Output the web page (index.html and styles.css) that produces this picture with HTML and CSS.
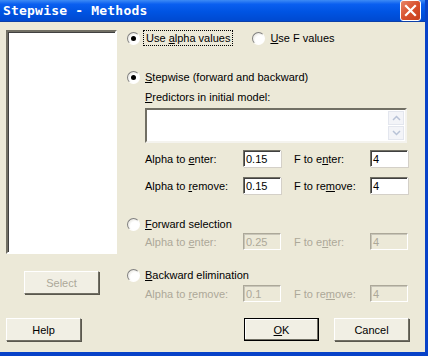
FILE: index.html
```html
<!DOCTYPE html>
<html lang="en">
<head>
  <meta charset="UTF-8">
  <title>Stepwise - Methods</title>
  <link rel="stylesheet" href="styles.css">
</head>
<body>

<div class="window">
  <div class="titlebar">
    <span class="title">Stepwise - Methods</span>
    <div class="close">
      <svg width="19" height="19" viewBox="0 0 19 19">
        <path d="M5 5 L14 14 M14 5 L5 14" stroke="#fff" stroke-width="2.2" stroke-linecap="square"/>
      </svg>
    </div>
  </div>

  <div class="content">
    <div class="main">
      <!-- variable list -->
      <div class="left">
        <div class="listbox"></div>
        <button class="btn select-btn" disabled>Select</button>
      </div>

      <!-- options -->
      <div class="right">
        <div class="row opts">
          <label class="radio-label focus"><span class="radio checked"></span><span class="focus-text">Use <u>a</u>lpha values</span></label>
          <label class="radio-label use-f"><span class="radio"></span><span><u>U</u>se F values</span></label>
        </div>

        <div class="row method stepwise">
          <label class="radio-label"><span class="radio checked"></span><span><u>S</u>tepwise (forward and backward)</span></label>
        </div>
        <div class="row indent predictors"><u>P</u>redictors in initial model:</div>
        <div class="textarea indent">
          <div class="scroll">
            <div class="arrow">
              <svg width="9" height="6" viewBox="0 0 9 6"><path d="M1 5 L4.5 1.5 L8 5" fill="none" stroke="#b8c2d6" stroke-width="1.5"/></svg>
            </div>
            <div class="arrow">
              <svg width="9" height="6" viewBox="0 0 9 6"><path d="M1 1 L4.5 4.5 L8 1" fill="none" stroke="#b8c2d6" stroke-width="1.5"/></svg>
            </div>
          </div>
        </div>
        <div class="params indent first">
          <span class="plabel">Alpha to <u>e</u>nter:</span>
          <span class="field">0.15</span>
          <span class="flabel">F to e<u>n</u>ter:</span>
          <span class="field">4</span>
        </div>
        <div class="params indent second">
          <span class="plabel">Alpha to <u>r</u>emove:</span>
          <span class="field">0.15</span>
          <span class="flabel">F to re<u>m</u>ove:</span>
          <span class="field">4</span>
        </div>

        <div class="row method forward">
          <label class="radio-label"><span class="radio"></span><span><u>F</u>orward selection</span></label>
        </div>
        <div class="params indent disabled">
          <span class="plabel">Alpha to <u>e</u>nter:</span>
          <span class="field">0.25</span>
          <span class="flabel">F to e<u>n</u>ter:</span>
          <span class="field">4</span>
        </div>

        <div class="row method backward">
          <label class="radio-label"><span class="radio"></span><span><u>B</u>ackward elimination</span></label>
        </div>
        <div class="params indent disabled last">
          <span class="plabel">Alpha to <u>r</u>emove:</span>
          <span class="field">0.1</span>
          <span class="flabel">F to re<u>m</u>ove:</span>
          <span class="field">4</span>
        </div>
      </div>
    </div>

    <div class="bottom">
      <button class="btn">Help</button>
      <div class="spacer"></div>
      <button class="btn default"><u>O</u>K</button>
      <button class="btn cancel">Cancel</button>
    </div>
  </div>
</div>

</body>
</html>
```

FILE: styles.css
```css
body {
  margin: 0;
  font-family: "Liberation Sans", Arial, sans-serif;
  font-size: 11px;
  color: #000;
  background: #0a4ed8;
}
.window {
  width: 425px;
  height: 352px;
  background: #ece9d8;
  border-right: 3px solid #0842c8;
  border-bottom: 4px solid #0842c8;
  display: flex;
  flex-direction: column;
}
.titlebar {
  height: 21px;
  background: linear-gradient(#3d8bf5 0%, #0a5ff0 20%, #0054e3 55%, #0049d0 100%);
  border-bottom: 1px solid #0c3fa8;
  display: flex;
  align-items: center;
  padding-left: 3px;
}
.title {
  font-family: "DejaVu Sans Mono", monospace;
  font-weight: bold;
  font-size: 13px;
  color: #fff;
  letter-spacing: 0.2px;
  flex: 1;
}
.close {
  width: 19px;
  height: 19px;
  margin-right: 4px;
  border: 1px solid #fff;
  border-radius: 3px;
  background: linear-gradient(135deg, #e8856a 0%, #d8512e 50%, #c8401e 100%);
  display: flex;
  align-items: center;
  justify-content: center;
}
.content {
  flex: 1;
  display: flex;
  flex-direction: column;
  padding: 8px 0 0 6px;
}
.main {
  display: flex;
}
.left {
  width: 111px;
  display: flex;
  flex-direction: column;
}
.listbox {
  height: 220px;
  background: #fff;
  border: 2px solid;
  border-color: #716f64 #fff #fff #716f64;
  box-shadow: inset 1px 1px 0 #404040;
}
.btn {
  font-family: "Liberation Sans", Arial, sans-serif;
  font-size: 11px;
  width: 75px;
  height: 23px;
  padding: 0;
  background: #f1efe4;
  color: #000;
  border: 1px solid;
  border-color: #fff #716f64 #716f64 #fff;
  box-shadow: 1px 1px 0 #5a584e;
}
.btn:disabled {
  color: #aca899;
}
.select-btn {
  margin: 17px 0 0 18px;
}
.right {
  margin-left: 10px;
  width: 281px;
  display: flex;
  flex-direction: column;
}
.row {
  height: 16px;
  display: flex;
  align-items: center;
}
.indent {
  margin-left: 18px;
}
.radio-label {
  display: flex;
  align-items: center;
}
.radio {
  width: 11px;
  height: 11px;
  border: 1px solid;
  border-color: #808080 #fff #fff #808080;
  border-radius: 50%;
  background: radial-gradient(circle at 65% 65%, #fff 45%, #d8d6cc 100%);
  margin-right: 5px;
  position: relative;
}
.radio.checked::after {
  content: "";
  position: absolute;
  left: 3px;
  top: 3px;
  width: 5px;
  height: 5px;
  border-radius: 50%;
  background: #000;
}
.focus-text {
  outline: 1px dotted #000;
  outline-offset: 1px;
  padding: 0 1px;
}
.use-f {
  margin-left: 21px;
}
.stepwise {
  margin-top: 23px;
}
.predictors {
  margin-top: 4px;
}
.textarea {
  margin-top: 3px;
  height: 31px;
  width: 258px;
  background: #fff;
  border: 2px solid;
  border-color: #716f64 #f4f3ee #f4f3ee #716f64;
  display: flex;
  justify-content: flex-end;
}
.scroll {
  width: 16px;
  display: flex;
  flex-direction: column;
  padding: 1px 1px 0 0;
}
.arrow {
  height: 14px;
  border: 1px solid #e3e6ee;
  background: #f3f4f8;
  display: flex;
  align-items: center;
  justify-content: center;
  box-sizing: border-box;
  margin-bottom: 1px;
}
.params {
  height: 19px;
  display: flex;
  align-items: center;
}
.params.first {
  margin-top: 6px;
}
.params.second {
  margin-top: 8px;
}
.plabel {
  width: 98px;
}
.flabel {
  width: 76px;
  margin-left: 13px;
}
.field {
  width: 34px;
  height: 15px;
  line-height: 17px;
  padding-left: 2px;
  background: #fff;
  border: 1px solid;
  border-color: #716f64 #fff #fff #716f64;
  box-shadow: inset 1px 1px 0 #404040, 1px 1px 0 #d4d0c8;
}
.params.disabled {
  color: #aca899;
}
.params.disabled .field {
  background: #ece9d8;
  border-color: #aca899 #fff #fff #aca899;
  box-shadow: inset 1px 1px 0 #c8c5b8;
}
.forward {
  margin-top: 21px;
}
.backward {
  margin-top: 16px;
}
.params.last {
  margin-top: 1px;
}
.bottom {
  display: flex;
  margin-top: 15px;
  width: 403px;
}
.spacer {
  flex: 1;
}
.default {
  border: 1px solid #000;
  box-shadow: inset -1px -1px 0 #716f64, inset 1px 1px 0 #fff;
}
.cancel {
  margin-left: 15px;
}
```
